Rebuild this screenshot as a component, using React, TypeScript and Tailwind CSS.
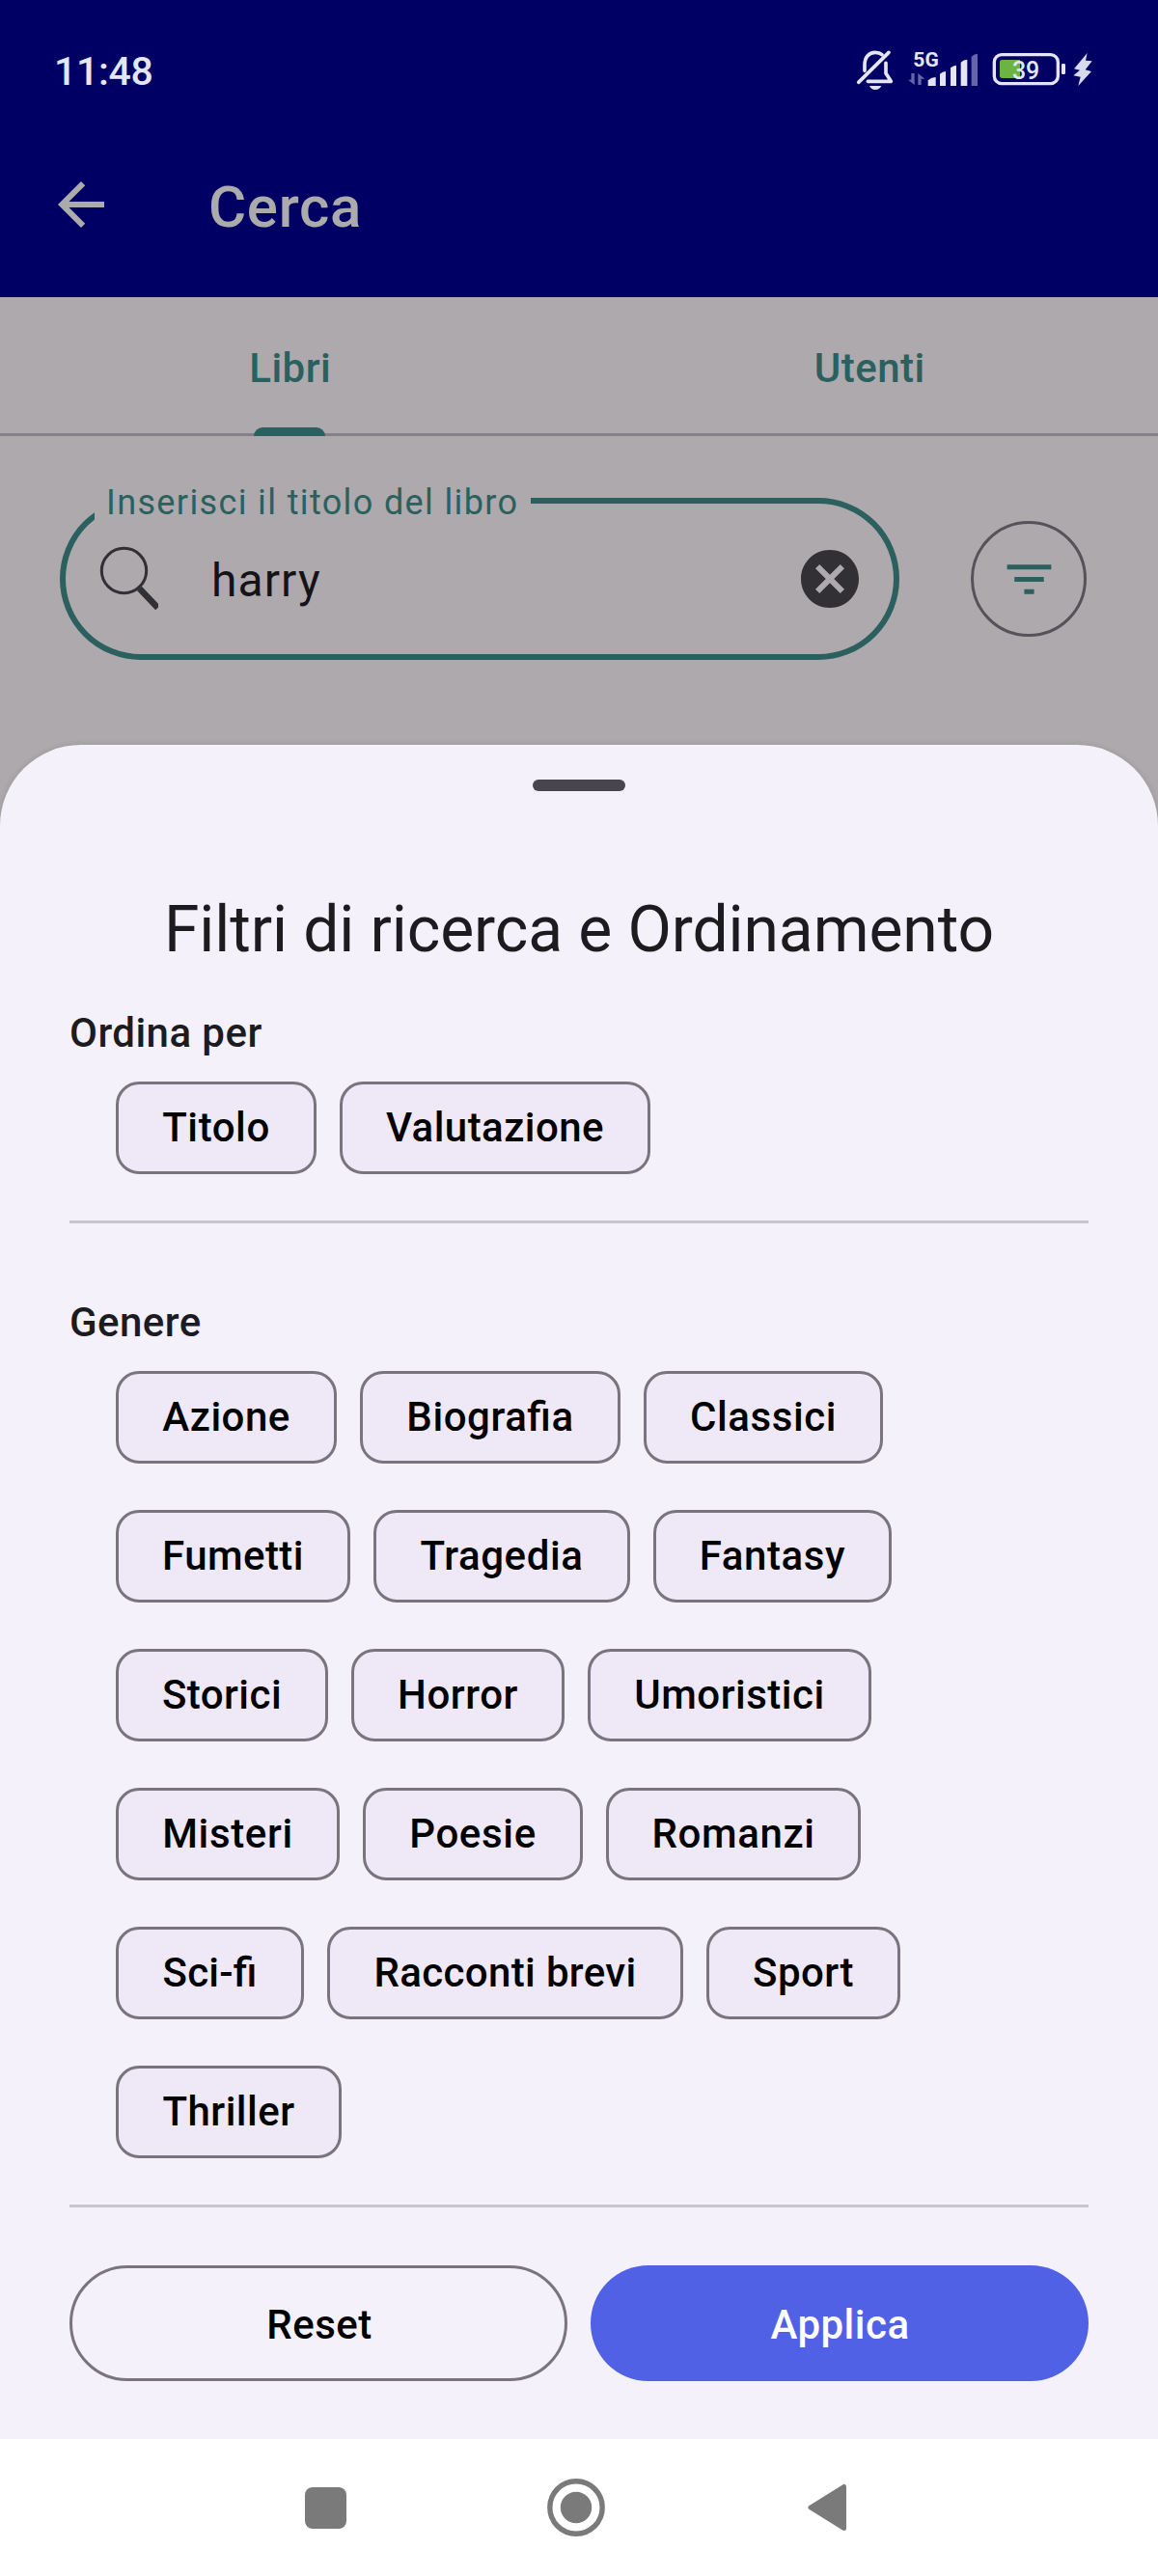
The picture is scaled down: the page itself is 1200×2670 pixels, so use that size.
import React from 'react';
import { MdArrowBack, MdCancel, MdFilterList } from 'react-icons/md';

type ChipData = { label: string; size: string };

const SORT_OPTIONS: ChipData[] = [
  { label: 'Titolo', size: 'w-[208px] tracking-[0.58px]' },
  { label: 'Valutazione', size: 'w-[322px] tracking-[0.45px]' },
];

const GENRE_ROWS: ChipData[][] = [
  [
    { label: 'Azione', size: 'w-[229px] tracking-[0.45px]' },
    { label: 'Biografia', size: 'w-[270px] tracking-[0.58px]' },
    { label: 'Classici', size: 'w-[248px] tracking-[0.58px]' },
  ],
  [
    { label: 'Fumetti', size: 'w-[243px] tracking-[0.45px]' },
    { label: 'Tragedia', size: 'w-[266px] tracking-[0.58px]' },
    { label: 'Fantasy', size: 'w-[247px] tracking-[0.58px]' },
  ],
  [
    { label: 'Storici', size: 'w-[220px] tracking-[0.45px]' },
    { label: 'Horror', size: 'w-[221px] tracking-[0.58px]' },
    { label: 'Umoristici', size: 'w-[294px] tracking-[0.5px]' },
  ],
  [
    { label: 'Misteri', size: 'w-[232px] tracking-[0.65px]' },
    { label: 'Poesie', size: 'w-[228px] tracking-[0.65px]' },
    { label: 'Romanzi', size: 'w-[264px] tracking-[0.6px]' },
  ],
  [
    { label: 'Sci-fi', size: 'w-[195px] tracking-[0.2px]' },
    { label: 'Racconti brevi', size: 'w-[369px] tracking-[0.35px]' },
    { label: 'Sport', size: 'w-[201px] tracking-[0.45px]' },
  ],
  [{ label: 'Thriller', size: 'w-[234px] tracking-[0.5px]' }],
];

function StatusIcons() {
  return (
    <svg viewBox="0 0 900 270" className="h-[90px] w-[300px]" fill="none">
      {/* muted bell */}
      <g stroke="#e5e5f6" strokeWidth="11" strokeLinecap="round" strokeLinejoin="round">
        <path d="M108 130V112C108 87 122 73 141 73C149 73 156 75 162 80" />
        <path d="M174 106V138L190 163H118" />
        <path d="M89 166L183 73" />
      </g>
      <path d="M123 177H160C156 185 150 189 141 189C132 189 127 185 123 177Z" fill="#e5e5f6" />
      {/* mobile signal */}
      <text x="259" y="117" fontSize="63" fontWeight="700" fontFamily="Roboto, sans-serif" fill="#e5e5f6">5G</text>
      <g fill="#6665a8">
        <path d="M253 138H263V174L243 158H253Z" />
        <path d="M274 174V138L295 155H284V174Z" />
        <path d="M440 177V86Q449 77 459 77V177Z" />
      </g>
      <g fill="#e5e5f6">
        <path d="M305 177V160Q316 150 329 150V177Z" />
        <path d="M342 177V140Q350 132 360 132V177Z" />
        <path d="M375 177V121Q384 113 393 113V177Z" />
        <path d="M407 177V104Q416 95 427 95V177Z" />
      </g>
      {/* battery */}
      <rect x="511" y="80" width="198" height="90" rx="23" stroke="#e5e5f6" strokeWidth="10" />
      <path d="M536 96H591V153H536Q528 153 528 145V104Q528 96 536 96Z" fill="#6cb440" />
      <rect x="720" y="108" width="12" height="33" rx="4" fill="#e5e5f6" />
      <text x="567" y="156" fontSize="75" fontWeight="500" letterSpacing="-1" fontFamily="Roboto, sans-serif" fill="#e5e5f6">39</text>
      <path d="M800 75L759 124L777 128L757 145L779 149L772 177L813 132L794 127L815 100L795 98Z" fill="#d9d9ee" />
    </svg>
  );
}

function Chip({ label, size }: ChipData) {
  return (
    <button
      className={`${size} flex h-24 shrink-0 items-center justify-center rounded-3xl border-3 border-[#79747e] bg-[#efe9f7] pb-[2px] text-[42px] font-medium whitespace-nowrap text-black [font-feature-settings:'liga']`}
    >
      {label}
    </button>
  );
}

function SearchField() {
  return (
    <div className="relative flex h-[168px] w-[870px] items-center rounded-full border-6 border-[#2b605e]">
      <span className="absolute -top-[22px] left-[30px] h-[54px] w-[452px] bg-[#ada9ac] pl-3 text-4xl leading-[42px] tracking-[1.37px] whitespace-nowrap text-[#2b605e]">
        Inserisci il titolo del libro
      </span>
      <svg viewBox="0 0 72 72" className="ml-6 size-[72px]" fill="none" stroke="#322f35">
        <circle cx="36.5" cy="27.5" r="23.2" strokeWidth="3" />
        <path d="M52.5 46L71.5 66" strokeWidth="6.5" />
      </svg>
      <span className="ml-[55px] grow pt-[3px] text-5xl leading-[72px] tracking-[1.1px] text-[#151318]">harry</span>
      <MdCancel className="mr-[30px] size-[72px] text-[#322f35]" />
    </div>
  );
}

export default function App() {
  return (
    <div className="flex h-[2670px] w-[1200px] flex-col bg-[#ada9ac] font-[Roboto,sans-serif]">
      <header className="h-[308px] shrink-0 bg-[#000064]">
        <div className="flex h-[116px] items-start justify-between pr-10 pl-14">
          <span className="pt-[49px] text-[41px] leading-[50px] font-medium tracking-[-0.3px] text-[#e5e5f6]">11:48</span>
          <div className="pt-[30px]">
            <StatusIcons />
          </div>
        </div>
        <div className="flex h-48 items-center pl-12 text-[#ababab]">
          <MdArrowBack className="size-[72px]" />
          <h1 className="ml-24 pt-[5px] text-[60px] leading-[72px] font-medium tracking-[0.7px]">Cerca</h1>
        </div>
      </header>

      <nav className="flex h-36 shrink-0 border-b-3 border-[#848189] text-[42px] font-medium tracking-[0.5px] text-[#2b605e]">
        <div className="relative flex flex-1 items-center justify-center pt-[6px] pl-[2px]">
          Libri
          <span className="absolute -bottom-[3px] left-[263px] h-[9px] w-[74px] rounded-t-[9px] bg-[#2b605e]" />
        </div>
        <div className="flex flex-1 items-center justify-center pt-[6px] pl-[3px]">Utenti</div>
      </nav>

      <section className="flex h-80 shrink-0 items-start justify-between pt-16 pr-[74px] pl-[62px]">
        <SearchField />
        <button className="mt-6 flex size-[120px] items-center justify-center rounded-full border-3 border-[#55525a] text-[#2b605e]">
          <MdFilterList className="size-[61px]" />
        </button>
      </section>

      <main className="h-[1756px] shrink-0 rounded-t-[84px] bg-[#f5f1fa] px-[72px] pt-9 text-[#1c1b1f] shadow-[0_0_6px_rgba(0,0,0,0.12)]">
        <div className="mx-auto h-3 w-24 rounded-full bg-[#49454f]" />
        <h2 className="mt-[102px] text-center text-[66px] leading-[84px] tracking-[-0.1px] whitespace-nowrap">
          Filtri di ricerca e Ordinamento
        </h2>
        <h3 className="mt-[35px] text-[42px] leading-[60px] font-medium tracking-[0.45px]">Ordina per</h3>
        <div className="mt-5 ml-12 flex gap-6">
          {SORT_OPTIONS.map((option) => (
            <Chip key={option.label} {...option} />
          ))}
        </div>
        <div className="mt-12 h-[3px] bg-[#c7c5d0]" />
        <h3 className="mt-[73px] text-[42px] leading-[60px] font-medium tracking-[0.45px]">Genere</h3>
        <div className="mt-5 ml-12 flex flex-col gap-12">
          {GENRE_ROWS.map((row) => (
            <div key={row[0].label} className="flex gap-6">
              {row.map((genre) => (
                <Chip key={genre.label} {...genre} />
              ))}
            </div>
          ))}
        </div>
        <div className="mt-12 h-[3px] bg-[#c7c5d0]" />
        <div className="mt-[60px] flex gap-6 text-[42px] font-medium tracking-[0.5px]">
          <button className="h-[120px] w-[516px] rounded-full border-3 border-[#79747e] pt-[2px] pl-[2px] text-black">Reset</button>
          <button className="h-[120px] w-[516px] rounded-full bg-[#5061e6] pt-[2px] pl-px text-white">Applica</button>
        </div>
      </main>

      <footer className="relative z-10 flex h-[142px] shrink-0 items-center bg-white pl-[316px] text-[#7a7a7a]">
        <span className="size-[43px] rounded-lg bg-[#7a7a7a]" />
        <svg viewBox="0 0 60 60" className="ml-[208px] size-[60px]">
          <circle cx="30" cy="30" r="27.2" fill="none" stroke="currentColor" strokeWidth="5.4" />
          <circle cx="30" cy="30" r="16.2" fill="currentColor" />
        </svg>
        <svg viewBox="0 0 40 50" className="ml-[210px] h-[50px] w-10" fill="currentColor" stroke="currentColor">
          <path d="M3 25L37.5 3.5V46.5Z" strokeWidth="5" strokeLinejoin="round" />
        </svg>
      </footer>
    </div>
  );
}
